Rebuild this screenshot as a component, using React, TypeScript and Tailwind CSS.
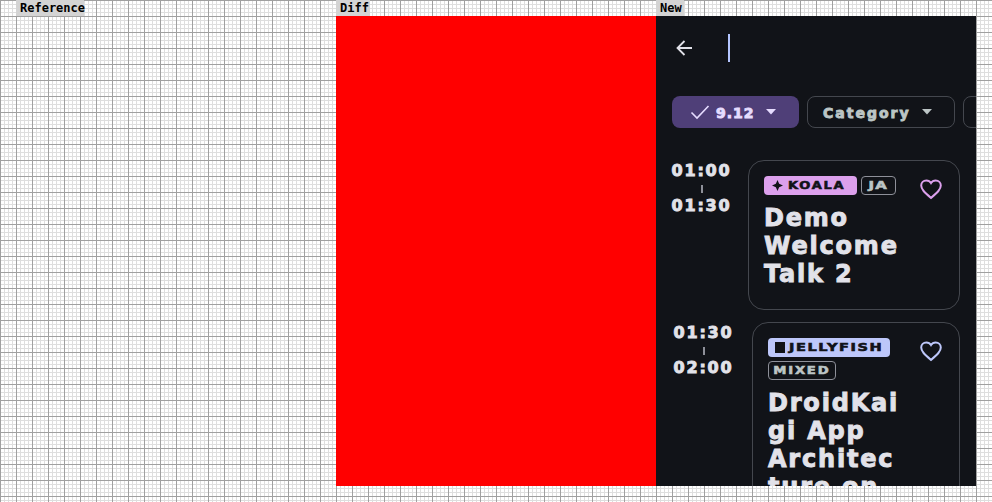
import React from "react";

const disp = "font-['DejaVu_Sans'] font-bold [-webkit-text-stroke:0.9px_currentColor]";
const tag = "font-['DejaVu_Sans'] font-bold [-webkit-text-stroke:0.6px_currentColor] text-[11px] leading-none";

function Label({ children, w }: { children: React.ReactNode; w: string }) {
  return (
    <div className={`h-4 ${w} bg-[#d4d4d4] pl-1 font-['DejaVu_Sans_Mono'] font-bold text-[12px] leading-4 text-black`}>
      {children}
    </div>
  );
}

function Caret() {
  return (
    <svg width="12" height="6" viewBox="0 0 12 6" className="shrink-0">
      <path d="M1 0H11L6 5.500Z" fill="currentColor" />
    </svg>
  );
}

function Heart({ color }: { color: string }) {
  return (
    <svg width="24" height="24" viewBox="0 0 24 24" fill="none" stroke={color} strokeWidth="2" className="shrink-0">
      <path d="M12 21C5.400 15.200 2.200 12.300 2.200 8.600 2.200 5.700 4.400 3.500 7.300 3.500c1.900 0 3.700.9 4.700 2.600 1-1.700 2.800-2.600 4.700-2.600 2.900 0 5.100 2.200 5.100 5.100 0 3.700-3.200 6.600-9.800 12.400Z" />
    </svg>
  );
}

function Times({ from, to, w }: { from: string; to: string; w: string }) {
  return (
    <div className={`${w} shrink-0 flex flex-col items-center pt-px text-[16px] leading-5 tracking-[1.8px] text-[#e2e2e9] ${disp}`}>
      <span>{from}</span>
      <span className="mt-1 mb-[3px] h-2 w-0.5 bg-[#8e9099]" />
      <span>{to}</span>
    </div>
  );
}

export default function App() {
  return (
    <div className="relative flex h-[502px] w-[992px] overflow-hidden bg-white pl-4 bg-[linear-gradient(#a0a0a0_1px,transparent_1px),linear-gradient(90deg,#a0a0a0_1px,transparent_1px),linear-gradient(#dedede_1px,transparent_1px),linear-gradient(90deg,#dedede_1px,transparent_1px)] bg-[size:16px_16px,16px_16px,4px_4px,4px_4px]">
      <div className="w-80">
        <Label w="w-[68px]">Reference</Label>
      </div>
      <div className="w-80">
        <Label w="w-[34px]">Diff</Label>
        <div className="h-[470px] bg-[#ff0000]" />
      </div>
      <div className="w-80">
        <Label w="w-[28px]">New</Label>
        <div className="h-[470px] overflow-hidden bg-[#111318] text-[#e2e2e9]">
          <header className="flex h-16 items-center pl-5">
            <svg width="16" height="16" viewBox="0 0 16 16" fill="none" stroke="#e2e2e9" strokeWidth="1.8" className="shrink-0">
              <path d="M16 8H1.500M8.500 1 1.500 8l7 7" />
            </svg>
            <span className="ml-9 h-7 w-0.5 bg-[#b4c5ff]" />
          </header>
          <div className="mt-4 flex gap-2 pl-4">
            <div className="flex h-8 w-[127px] shrink-0 items-center rounded-lg bg-[#4f3f78] pl-[18px] text-[#e6dcff]">
              <svg width="20" height="20" viewBox="0 0 20 20" fill="none" stroke="#e6dcff" strokeWidth="1.6" className="shrink-0">
                <path d="M1.500 10.500 7 16 18.500 4" />
              </svg>
              <span className={`ml-[6px] pt-0.5 text-[14px] tracking-[1px] ${disp}`}>9.12</span>
              <span className="ml-[10px]"><Caret /></span>
            </div>
            <div className="flex h-8 w-[148px] shrink-0 items-center rounded-lg border border-[#44474e] pl-[15px] text-[#bcc5c5]">
              <span className={`pt-0.5 text-[14px] tracking-[2px] ${disp}`}>Category</span>
              <span className="ml-[10px]"><Caret /></span>
            </div>
            <div className="h-8 w-[60px] shrink-0 rounded-lg border border-[#44474e]" />
          </div>
          <div className="mt-8 flex flex-col gap-3 pl-4 pr-4">
            <div className="flex gap-[17px]">
              <Times from="01:00" to="01:30" w="w-[59px]" />
              <article className="flex h-[150px] flex-1 flex-col rounded-2xl border border-[#44474e] pl-[15px] pr-4 pt-[15px]">
                <div className="flex items-start justify-between">
                  <div className="flex gap-1">
                    <div className="flex h-[19px] w-[93px] items-center justify-center gap-[5px] rounded bg-[#dca0ec] text-[#111318]">
                      <svg width="11" height="11" viewBox="0 0 12 12" className="shrink-0"><path d="M6 0 7.800 4.200 12 6 7.800 7.800 6 12 4.200 7.800 0 6 4.200 4.200Z" fill="currentColor" /></svg>
                      <span className={`w-[62px] scale-x-[1.18] origin-left tracking-[1.5px] ${tag}`}>KOALA</span>
                    </div>
                    <span className={`flex h-[19px] w-[35px] items-center justify-center rounded border border-[#8e9099] text-[#bcc5c5]`}>
                      <span className={`scale-x-[1.35] tracking-[1px] ${tag}`}>JA</span>
                    </span>
                  </div>
                  <div className="mt-px"><Heart color="#dca0ec" /></div>
                </div>
                <h2 className={`mt-[3px] text-[24px] leading-7 tracking-[1.8px] text-[#e2e2e9] ${disp}`}>
                  <span className="block">Demo</span>
                  <span className="block">Welcome</span>
                  <span className="block">Talk 2</span>
                </h2>
              </article>
            </div>
            <div className="flex gap-[17px]">
              <Times from="01:30" to="02:00" w="w-[63px]" />
              <article className="flex h-[200px] flex-1 flex-col rounded-2xl border border-[#44474e] pl-[15px] pr-4 pt-[15px]">
                <div className="flex items-start justify-between">
                  <div className="flex flex-col items-start gap-1">
                    <div className="flex h-[19px] w-[122px] items-center gap-1 rounded bg-[#bdc7fa] pl-[7px] text-[#111318]">
                      <span className="h-[11px] w-[10px] shrink-0 bg-[#111318]" />
                      <span className={`scale-x-[1.32] origin-left tracking-[1.2px] ${tag}`}>JELLYFISH</span>
                    </div>
                    <span className={`flex h-[19px] w-[68px] items-center justify-center rounded border border-[#8e9099] text-[#bcc5c5]`}>
                      <span className={`scale-x-[1.2] tracking-[1.5px] ${tag}`}>MIXED</span>
                    </span>
                  </div>
                  <div className="mt-px"><Heart color="#bdc7fa" /></div>
                </div>
                <h2 className={`mt-[9px] text-[24px] leading-7 tracking-[1.8px] text-[#e2e2e9] ${disp}`}>
                  <span className="block">DroidKai</span>
                  <span className="block">gi App</span>
                  <span className="block">Architec</span>
                  <span className="block">ture on</span>
                </h2>
              </article>
            </div>
          </div>
        </div>
      </div>
    </div>
  );
}
